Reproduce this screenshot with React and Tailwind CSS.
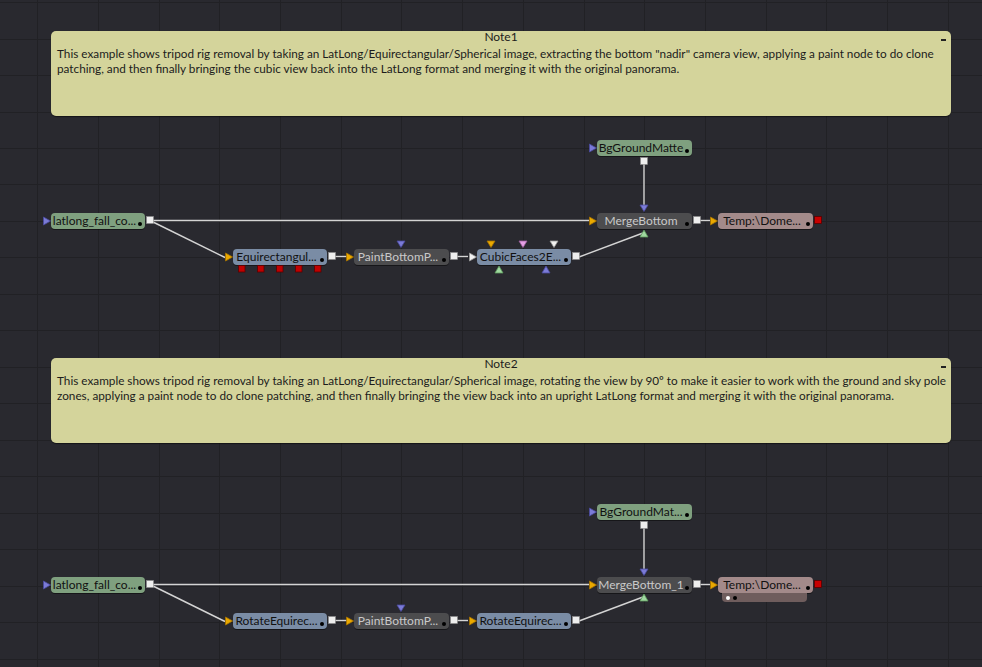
import React from 'react';

const FONT = { fontFamily: 'Lato, "Open Sans", sans-serif' };

const GREEN = 'bg-[#7fa07f] text-[#111]';
const STEEL = 'bg-[#7a8ca5] text-[#111]';
const GRAY = 'bg-[#4c4c4e] text-[#c9c9c9]';
const ROSE = 'bg-[#a38a8a] text-[#111]';

const tri = {
  yellow: ['#eaa900', '#a87400'],
  blue: ['#7b7bd6', '#4a4aa0'],
  green: ['#9fd89f', '#5d9a5d'],
  pink: ['#e49fe4', '#a060a0'],
  white: ['#f2f2f2', '#9a9a9a'],
};

// one row of the graph, shifted down by dy
function rowNodes(dy, second) {
  return [
    { x: 51, y: 213 + dy, w: 94, label: 'latlong_fall_co...', cls: GREEN, left: 'blue', out: true },
    { x: 233, y: 249 + dy, w: 94, label: second ? 'RotateEquirec...' : 'Equirectangul...', cls: STEEL, left: 'yellow', out: true, reds: !second },
    { x: 354, y: 249 + dy, w: 95, label: 'PaintBottomP...', cls: GRAY, left: 'yellow', out: true, top: [['blue', 397]] },
    {
      x: 477, y: 249 + dy, w: 94, label: second ? 'RotateEquirec...' : 'CubicFaces2E...', cls: STEEL,
      left: second ? 'yellow' : 'white', out: true,
      top: second ? [] : [['yellow', 487], ['pink', 519], ['white', 550]],
      bottom: second ? [] : [['green', 495], ['blue', 542]],
    },
    { x: 597, y: 140 + dy, w: 95, label: second ? 'BgGroundMat...' : 'BgGroundMatte', cls: GREEN, left: 'blue', outBelow: true },
    { x: 597, y: 213 + dy, w: 95, label: second ? 'MergeBottom_1' : 'MergeBottom', cls: GRAY, left: 'yellow', out: true, top: [['blue', 640]], bottom: [['green', 640]] },
    { x: 718, y: 213 + dy, w: 95, label: 'Temp:\\Dome...', cls: ROSE, left: 'yellow', redOut: true, extra: second },
  ];
}

function rowLines(dy) {
  return [
    [153, 220.5, 589, 220.5],
    [153, 222, 225, 257.5],
    [335, 256.5, 347, 256.5],
    [457, 256.5, 468, 256.5],
    [579, 257, 643, 233],
    [644, 164, 644, 206],
    [700, 220.5, 710, 220.5],
  ].map(([a, b, c, d]) => [a, b + dy, c, d + dy]);
}

const nodes = [...rowNodes(0, false), ...rowNodes(364, true)];
const lines = [...rowLines(0), ...rowLines(364)];

function Grid() {
  const v = [];
  for (let i = 0; i < 16; i++) v.push(Math.round(37.3 + 60.69 * i) + 0.5);
  const h = [];
  for (let i = 0; i < 19; i++) h.push(Math.round(2.1 + 36.48 * i) + 0.5);
  return (
    <svg className="absolute inset-0" width="982" height="667" shapeRendering="crispEdges">
      {v.map(x => <line key={'v' + x} x1={x} y1="0" x2={x} y2="667" stroke="#212125" strokeWidth="1" />)}
      {h.map(y => <line key={'h' + y} x1="0" y1={y} x2="982" y2={y} stroke="#212125" strokeWidth="1" />)}
    </svg>
  );
}

function Ports() {
  const shapes = [];
  nodes.forEach((n, i) => {
    const cy = n.y + 8;
    if (n.left) {
      const [f, s] = tri[n.left];
      shapes.push(<polygon key={i + 'l'} points={`${n.x - 7.5},${cy - 4} ${n.x - 0.5},${cy} ${n.x - 7.5},${cy + 4}`} fill={f} stroke={s} strokeWidth="0.8" />);
    }
    (n.top || []).forEach(([c, x], j) => {
      const [f, s] = tri[c];
      shapes.push(<polygon key={i + 't' + j} points={`${x},${n.y - 8} ${x + 8},${n.y - 8} ${x + 4},${n.y - 1.5}`} fill={f} stroke={s} strokeWidth="0.8" />);
    });
    (n.bottom || []).forEach(([c, x], j) => {
      const [f, s] = tri[c];
      shapes.push(<polygon key={i + 'b' + j} points={`${x},${n.y + 24} ${x + 8},${n.y + 24} ${x + 4},${n.y + 17}`} fill={f} stroke={s} strokeWidth="0.8" />);
    });
    if (n.out) shapes.push(<rect key={i + 'o'} x={n.x + n.w + 1.5} y={cy - 4.5} width="7" height="7" fill="#eeeeee" stroke="#8a8a8a" strokeWidth="0.6" />);
    if (n.outBelow) shapes.push(<rect key={i + 'ob'} x={n.x + 43.5} y={n.y + 17.5} width="7" height="7" fill="#eeeeee" stroke="#8a8a8a" strokeWidth="0.6" />);
    if (n.redOut) shapes.push(<rect key={i + 'r'} x={n.x + n.w + 1.5} y={cy - 4.5} width="7" height="7" fill="#c80000" stroke="#5a0000" strokeWidth="0.8" />);
    if (n.reds) {
      [5, 24, 43, 62, 81].forEach(dx => {
        shapes.push(<rect key={i + 'red' + dx} x={n.x + dx + 0.5} y={n.y + 16.5} width="6.5" height="6.5" fill="#c00000" stroke="#5a0000" strokeWidth="0.8" />);
      });
    }
  });
  return (
    <svg className="absolute inset-0 pointer-events-none" width="982" height="667">
      {shapes}
    </svg>
  );
}

function Wires() {
  return (
    <svg className="absolute inset-0" width="982" height="667">
      {lines.map(([x1, y1, x2, y2], i) => (
        <line key={i} x1={x1} y1={y1} x2={x2} y2={y2} stroke="#d4d4d4" strokeWidth="1.4" />
      ))}
    </svg>
  );
}

function Node({ n }) {
  return (
    <div
      className={`absolute h-[16px] rounded-[4px] shadow-[0_1px_0_rgba(0,0,0,0.45)] ${n.cls}`}
      style={{ left: n.x, top: n.y, width: n.w }}
    >
      <div className="flex h-full items-center justify-center pr-[7px] text-[12px] leading-none whitespace-nowrap" style={FONT}>
        {n.label}
      </div>
      <div className="absolute right-[3px] bottom-[3px] h-[4px] w-[4px] rounded-full bg-black" />
      {n.extra && (
        <div className="absolute left-[4px] top-[16px] flex h-[9px] w-[85px] items-center gap-[3px] rounded-b-[4px] bg-[#6f5d5d] pl-[4px]">
          <div className="h-[4px] w-[4px] rounded-full bg-white" />
          <div className="h-[4px] w-[4px] rounded-full bg-black" />
        </div>
      )}
    </div>
  );
}

function Note({ top, title, lines }) {
  return (
    <div
      className="absolute left-[51px] h-[85px] w-[900px] rounded-[5px] bg-[#d4d49b] text-[#1c1c1c] shadow-[0_1px_1px_rgba(0,0,0,0.5)]"
      style={{ top, ...FONT }}
    >
      <div className="h-[12px] text-center text-[12px] leading-[12px]">{title}</div>
      <div className="absolute right-[5px] top-[8px] h-[1.5px] w-[5px] bg-[#222]" />
      <div className="mt-[2.5px] pl-[6px] text-[11.75px] leading-[15px] whitespace-nowrap">
        {lines.map(l => <div key={l}>{l}</div>)}
      </div>
    </div>
  );
}

export default function App() {
  return (
    <div className="relative h-[667px] w-[982px] overflow-hidden bg-[#29292f]">
      <Grid />
      <Note
        top={31}
        title="Note1"
        lines={[
          'This example shows tripod rig removal by taking an LatLong/Equirectangular/Spherical image, extracting the bottom "nadir" camera view, applying a paint node to do clone',
          'patching, and then finally bringing the cubic view back into the LatLong format and merging it with the original panorama.',
        ]}
      />
      <Note
        top={358}
        title="Note2"
        lines={[
          'This example shows tripod rig removal by taking an LatLong/Equirectangular/Spherical image, rotating the view by 90º to make it easier to work with the ground and sky pole',
          'zones, applying a paint node to do clone patching, and then finally bringing the view back into an upright LatLong format and merging it with the original panorama.',
        ]}
      />
      <Wires />
      {nodes.map((n, i) => <Node key={i} n={n} />)}
      <Ports />
    </div>
  );
}
